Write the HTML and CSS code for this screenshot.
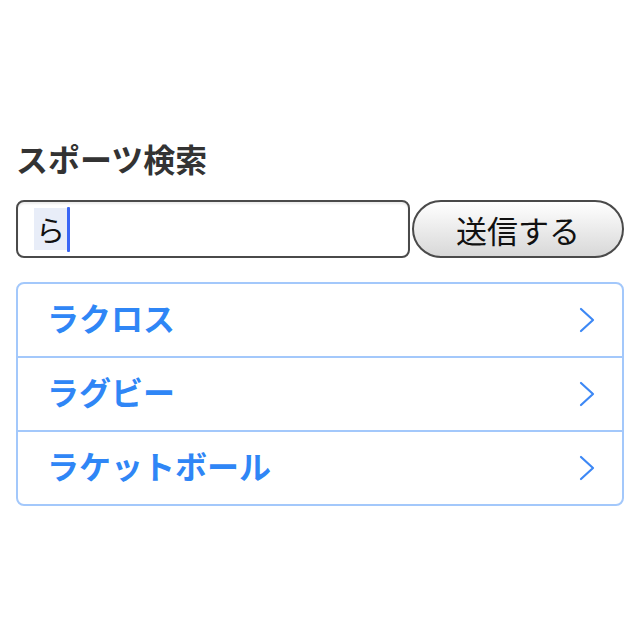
FILE: index.html
```html
<!DOCTYPE html>
<html lang="ja">
<head>
    <meta charset="UTF-8">
    <meta name="viewport" content="width=device-width, initial-scale=1.0">
    <title>スポーツ検索</title>
    <link rel="stylesheet" href="styles.css">
</head>
<body>
    <h1 class="title">スポーツ検索</h1>
    <form class="search">
        <div class="field"><span class="typed">ら</span><span class="caret"></span></div>
        <button class="send" type="button">送信する</button>
    </form>
    <ul class="results">
        <li class="row"><span>ラクロス</span>
            <svg class="chev" width="18" height="26" viewBox="0 0 18 26"><path d="M3 2 L15 13 L3 24" fill="none" stroke="#3d88f5" stroke-width="2.2" stroke-linecap="round" stroke-linejoin="round"/></svg>
        </li>
        <li class="row"><span>ラグビー</span>
            <svg class="chev" width="18" height="26" viewBox="0 0 18 26"><path d="M3 2 L15 13 L3 24" fill="none" stroke="#3d88f5" stroke-width="2.2" stroke-linecap="round" stroke-linejoin="round"/></svg>
        </li>
        <li class="row"><span>ラケットボール</span>
            <svg class="chev" width="18" height="26" viewBox="0 0 18 26"><path d="M3 2 L15 13 L3 24" fill="none" stroke="#3d88f5" stroke-width="2.2" stroke-linecap="round" stroke-linejoin="round"/></svg>
        </li>
    </ul>
</body>
</html>
```

FILE: styles.css
```css
body{
    margin: 0;
    padding: 134px 16px 0 16px;
    font-family: "Noto Sans CJK JP", "Noto Sans", sans-serif;
    background: #fff;
}
.title{
    margin: 0;
    font-size: 32px;
    font-weight: bold;
    color: #333;
    line-height: 48px;
}
.search{
    display: flex;
    gap: 2px;
    margin-top: 18px;
}
.field{
    box-sizing: border-box;
    width: 394px;
    height: 58px;
    border: 2px solid #4a4a4a;
    border-radius: 8px;
    display: flex;
    align-items: center;
    padding-left: 16px;
    box-shadow: inset 0 2px 2px rgba(0,0,0,0.08);
}
.typed{
    font-size: 29px;
    line-height: 42px;
    height: 42px;
    padding: 0 2px;
    background: #e8edf8;
    color: #111;
}
.caret{
    width: 3px;
    height: 45px;
    background: #3a66f5;
    border-radius: 1px;
}
.send{
    box-sizing: border-box;
    width: 212px;
    height: 58px;
    border: 2px solid #4a4a4a;
    border-radius: 29px;
    background: linear-gradient(#ffffff, #d8d8d8);
    font-family: "Noto Sans CJK JP", sans-serif;
    font-size: 31px;
    color: #111;
    padding: 0;
}
.results{
    list-style: none;
    margin: 24px 0 0 0;
    padding: 0;
    border: 2px solid #a3c8fb;
    border-radius: 8px;
    width: 604px;
}
.row{
    display: flex;
    justify-content: space-between;
    align-items: center;
    height: 72px;
    padding: 0 26px 0 29px;
    color: #2f86f6;
    font-size: 32px;
    font-weight: bold;
    line-height: 1;
}
.row span{
    margin-top: -6px;
}
.row + .row{
    border-top: 2px solid #a3c8fb;
}
```
